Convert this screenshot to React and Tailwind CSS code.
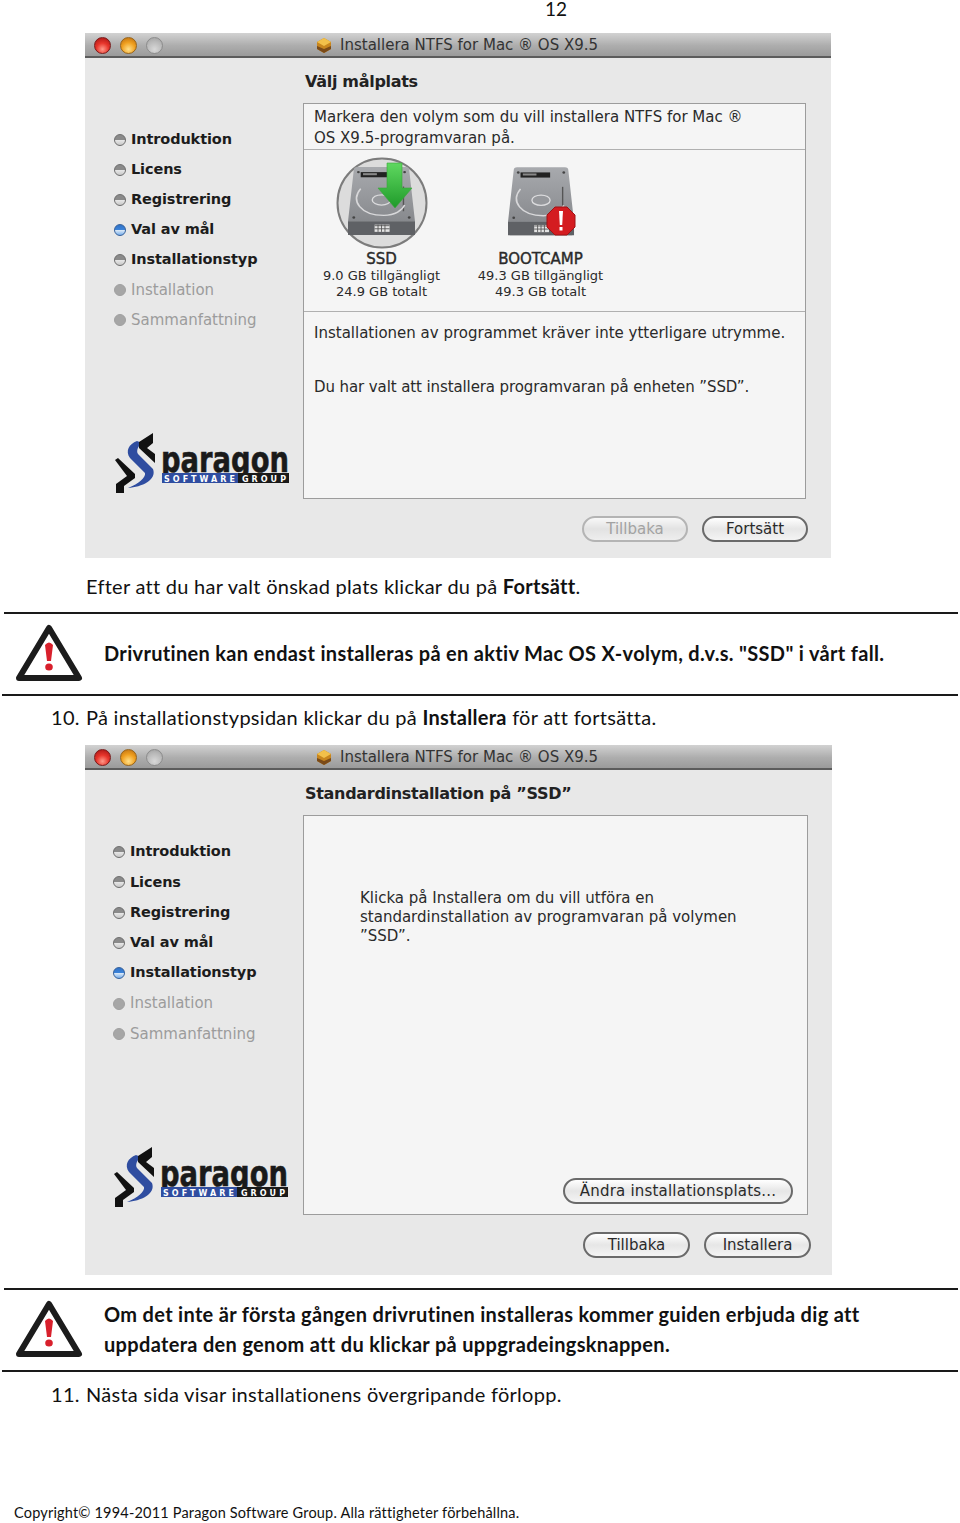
import React from "react";

const mac = { fontFamily: '"DejaVu Sans", sans-serif' };
const doc = { fontFamily: 'Lato, "Noto Sans", sans-serif' };

function Light({ c }) {
  const cls = {
    r: "bg-[radial-gradient(circle_at_50%_75%,#ff9a8a_0%,#e8362c_45%,#a01010_100%)] border-[#7a1a1a]",
    y: "bg-[radial-gradient(circle_at_50%_75%,#ffe08a_0%,#f0a020_50%,#b86a10_100%)] border-[#97641a]",
    g: "bg-[radial-gradient(circle_at_50%_75%,#d8d8d8_0%,#b8b8b8_60%,#9c9c9c_100%)] border-[#8c8c8c]",
  }[c];
  return <div className={`w-[17px] h-[17px] rounded-full border ${cls}`} />;
}

function Package() {
  return (
    <svg width="18" height="18" viewBox="0 0 18 18">
      <path d="M2 6 L9 2 L16 6 L16 13 L9 17 L2 13Z" fill="#c8861e" />
      <path d="M2 6 L9 2 L16 6 L9 10Z" fill="#f2c04a" />
      <path d="M2 10 L9 13 L16 10 L16 13 L9 17 L2 13Z" fill="#7a4a18" />
    </svg>
  );
}

function Bullet({ state }) {
  const cls = {
    done: "bg-[linear-gradient(#8a8a8a_0%,#8a8a8a_45%,#e8e8e8_50%,#c8c8c8_100%)] border-[#6d6d6d]",
    active: "bg-[linear-gradient(#2f72c8_0%,#3b82d8_45%,#e0ecf8_50%,#7ab0ec_100%)] border-[#35609a]",
    todo: "bg-[#a6a6a6] border-[#a0a0a0]",
  }[state];
  return <div className={`w-3 h-3 rounded-full border shrink-0 ${cls}`} />;
}

function Step({ label, state, row }) {
  return (
    <div className={`flex items-center gap-[5px] ${row}`}>
      <Bullet state={state} />
      <span className={state === "todo" ? "text-[15px] text-[#9c9c9c]" : "text-[14.5px] tracking-[-0.12px] font-bold text-[#1c1c1c]"}>
        {label}
      </span>
    </div>
  );
}

function Logo() {
  return (
    <svg width="180" height="64" viewBox="0 0 180 64">
      <text x="49" y="41" fontFamily='"DejaVu Sans", sans-serif' fontWeight="700" fontSize="36" textLength="128" lengthAdjust="spacingAndGlyphs" fill="#1a1a1a" stroke="#1a1a1a" strokeWidth="0.6">paragon</text>
      <rect x="40" y="42" width="140" height="22" fill="#e8e8e8" />
      <path d="M3 29 L6 27 L23 43 L23 47 L12 55 L12 62 L4 62 L4 53 L15 45Z" fill="#111" />
      <path d="M25 10 C17 13 13 20 18 27 L33 42 C34 46 27 53 16 57 C30 56 45 49 41 38 L26 23 C24 20 26 15 30 12Z" fill="#2f4da0" />
      <path d="M41 2 L27 11 L27 17 L43 32 L43 23 L35 17 L41 12Z" fill="#111" />
      <rect x="50" y="42" width="76" height="10" fill="#2f4da0" />
      <rect x="126" y="42" width="51" height="10" fill="#1a1a1a" />
      <text x="52" y="50.5" fontFamily='"DejaVu Sans", sans-serif' fontWeight="700" fontSize="8" textLength="71" fill="#fff">SOFTWARE</text>
      <text x="130" y="50.5" fontFamily='"DejaVu Sans", sans-serif' fontWeight="700" fontSize="8" textLength="44" fill="#fff">GROUP</text>
    </svg>
  );
}

function Disk({ id }) {
  return (
    <g>
      <defs>
        <linearGradient id={id} x1="0" y1="0" x2="0" y2="1">
          <stop offset="0" stopColor="#a8aaae" />
          <stop offset="1" stopColor="#7f8185" />
        </linearGradient>
      </defs>
      <path d="M16 12 Q16 9 19 9 L61 9 Q64 9 64 12 L69 62 L69 72 Q69 75 66 75 L14 75 Q11 75 11 72 L11 62Z" fill={`url(#${id})`} />
      <rect x="11" y="62" width="58" height="13" fill="#5f6165" />
      <rect x="34" y="65" width="13" height="7" fill="#e4e4e4" />
      <path d="M34 66 H47 M34 69 H47 M37 65 V72 M40 65 V72 M43 65 V72" stroke="#555" strokeWidth="0.8" />
      <rect x="22" y="14" width="26" height="5" fill="#222" />
      <rect x="24" y="15" width="12" height="2" fill="#888" />
      <path d="M59 28 V52" stroke="#555" strokeWidth="1.2" />
      <path d="M22 30 C13 42 22 56 42 56 C52 56 58 51 60 46" fill="none" stroke="#d8d8da" strokeWidth="1.4" />
      <ellipse cx="40" cy="41" rx="8" ry="5" fill="#96989c" stroke="#dcdcde" strokeWidth="1.2" />
      <circle cx="20" cy="14" r="1.2" fill="#444" />
      <circle cx="60" cy="14" r="1.2" fill="#444" />
      <circle cx="16" cy="58" r="1.2" fill="#444" />
      <circle cx="64" cy="58" r="1.2" fill="#444" />
    </g>
  );
}

function SsdIcon() {
  return (
    <svg width="92" height="92" viewBox="0 0 92 92">
      <circle cx="46" cy="46" r="44.5" fill="#dcdcdc" stroke="#7c7c7c" strokeWidth="2" />
      <g transform="translate(-0.7 0.7) scale(1.155 1.03)"><Disk id="d1" /></g>
      <defs>
        <linearGradient id="ga" x1="0" y1="0" x2="0" y2="1">
          <stop offset="0" stopColor="#5fd860" />
          <stop offset="1" stopColor="#1f9a2a" />
        </linearGradient>
      </defs>
      <path d="M51 6 L66 6 L66 31 L76 31 L59 51 L42 31 L51 31Z" fill="url(#ga)" stroke="#3aa53a" strokeWidth="0.6" />
    </svg>
  );
}

function BootIcon() {
  return (
    <svg width="76" height="72" viewBox="0 0 76 72">
      <g transform="translate(-7.5 -8) scale(1.138 1.03)"><Disk id="d2" /></g>
      <path d="M52 41 L64 41 L72 49 L72 61 L64 69 L52 69 L44 61 L44 49Z" fill="#d41c20" stroke="#a01215" strokeWidth="1" />
      <path d="M56 45 H60 L59.2 59 H56.8Z" fill="#fff" />
      <rect x="56.5" y="61" width="3" height="3.5" fill="#fff" />
    </svg>
  );
}

function TitleBar() {
  return (
    <div className="flex items-center h-[25px] pt-px bg-[linear-gradient(#d2d2d2,#adadad_55%,#9b9b9b)] border-b-2 border-b-[#5c5c5c] pl-[9px]">
      <div className="flex gap-[9px]">
        <Light c="r" />
        <Light c="y" />
        <Light c="g" />
      </div>
      <div className="flex items-center gap-[7px] ml-[152px] text-[15px] text-[#333]">
        <Package />
        <span>Installera NTFS for Mac ® OS X9.5</span>
      </div>
    </div>
  );
}

function Btn({ w, children, disabled, extra }) {
  return (
    <div
      className={`${w} flex h-[26px] items-center justify-center rounded-full border-2 text-[15px] ${extra || ""} ${
        disabled
          ? "border-[#b4b4b4] bg-[linear-gradient(#f8f8f8,#e2e2e2_50%,#eeeeee)] text-[#a2a2a2]"
          : "border-[#6a6a6a] bg-[linear-gradient(#ffffff,#e6e6e6_50%,#f4f4f4)] text-[#2a2a2a]"
      }`}
    >
      {children}
    </div>
  );
}

const steps = [
  ["Introduktion", "done"],
  ["Licens", "done"],
  ["Registrering", "done"],
];

function Sidebar({ active, pl, row }) {
  const rows = [
    ...steps,
    ["Val av mål", active === 0 ? "active" : "done"],
    ["Installationstyp", active === 1 ? "active" : "done"],
    ["Installation", "todo"],
    ["Sammanfattning", "todo"],
  ];
  return (
    <div className={`w-[218px] shrink-0 flex flex-col pt-[67px] ${pl}`}>
      {rows.map(([l, s]) => (
        <Step key={l} label={l} state={s} row={row} />
      ))}
      <div className="mt-[96px] -ml-[2px]">
        <Logo />
      </div>
    </div>
  );
}

function Window1() {
  return (
    <div className="ml-[85px] w-[746px] h-[525px] bg-[#e8e8e8] flex flex-col" style={mac}>
      <TitleBar />
      <div className="flex flex-1">
        <Sidebar active={0} pl="pl-[29px]" row="h-[30px]" />
        <div className="flex-1 flex flex-col pr-[25px]">
          <div className="h-[45px] pl-[2px] pt-[11px] text-[16px] tracking-[-0.3px] font-bold leading-[26px] text-[#222]">Välj målplats</div>
          <div className="h-[396px] border border-[#9c9c9c] bg-[#f5f5f5] flex flex-col text-[#2a2a2a]">
            <div className="h-[46px] border-b border-[#b0b0b0] pl-[10px] pt-[3px] text-[15px] leading-[21px]">
              <div className="whitespace-nowrap">Markera den volym som du vill installera NTFS for Mac ®</div>
              <div>OS X9.5-programvaran på.</div>
            </div>
            <div className="h-[162px] border-b border-[#b0b0b0] flex">
              <div className="w-[155px] flex flex-col items-center pt-[7px]">
                <SsdIcon />
                <div className="mt-[1px] text-[15px] leading-[18px] [-webkit-text-stroke:0.4px_#2a2a2a]">SSD</div>
                <div className="text-[13px] leading-[16px] text-center whitespace-nowrap">
                  9.0 GB tillgängligt<br />24.9 GB totalt
                </div>
              </div>
              <div className="w-[159px] flex flex-col items-center pt-[16px] pl-[4px]">
                <BootIcon />
                <div className="mt-[12px] text-[15px] leading-[18px] [-webkit-text-stroke:0.4px_#2a2a2a]">BOOTCAMP</div>
                <div className="text-[13px] leading-[16px] text-center whitespace-nowrap">
                  49.3 GB tillgängligt<br />49.3 GB totalt
                </div>
              </div>
            </div>
            <div className="pl-[10px] pt-[11px] text-[15px] leading-[21px]">
              <div className="whitespace-nowrap">Installationen av programmet kräver inte ytterligare utrymme.</div>
              <div className="mt-[33px] whitespace-nowrap tracking-[-0.1px]">Du har valt att installera programvaran på enheten ”SSD”.</div>
            </div>
          </div>
          <div className="flex justify-end gap-[14px] pt-[17px] -mr-[2px]">
            <Btn w="w-[106px]" disabled>Tillbaka</Btn>
            <Btn w="w-[106px]">Fortsätt</Btn>
          </div>
        </div>
      </div>
    </div>
  );
}

function Window2() {
  return (
    <div className="ml-[85px] w-[747px] h-[530px] bg-[#e8e8e8] flex flex-col" style={mac}>
      <TitleBar />
      <div className="flex flex-1">
        <Sidebar active={1} pl="pl-[28px]" row="h-[30.3px]" />
        <div className="flex-1 flex flex-col pr-[24px]">
          <div className="h-[45px] pl-[2px] pt-[11px] text-[16px] tracking-[-0.3px] font-bold leading-[26px] text-[#222] whitespace-nowrap">Standardinstallation på ”SSD”</div>
          <div className="h-[400px] border border-[#9c9c9c] bg-[#f5f5f5] flex flex-col justify-between text-[#2a2a2a]">
            <div className="pl-[56px] pt-[73px] text-[15px] leading-[19px] whitespace-nowrap">
              <div>Klicka på Installera om du vill utföra en</div>
              <div>standardinstallation av programvaran på volymen</div>
              <div>”SSD”.</div>
            </div>
            <div className="flex justify-end pr-[14px] pb-[10px]">
              <Btn w="w-[230px]" extra="tracking-[0.2px]">Ändra installationsplats...</Btn>
            </div>
          </div>
          <div className="flex justify-end gap-[14px] pt-[17px] -mr-[3px]">
            <Btn w="w-[107px]">Tillbaka</Btn>
            <Btn w="w-[107px]">Installera</Btn>
          </div>
        </div>
      </div>
    </div>
  );
}

function Warn() {
  return (
    <svg width="70" height="60" viewBox="0 0 70 60" className="shrink-0">
      <path d="M35 5 L65 55 L5 55Z" fill="#fff" stroke="#1c1c1c" strokeWidth="6" strokeLinejoin="round" />
      <path d="M31 22 Q35 17 39 22 L37 38 H33Z" fill="#d8202c" />
      <ellipse cx="35" cy="44" rx="3.8" ry="3.6" fill="#d8202c" />
    </svg>
  );
}

function Callout({ children }) {
  return (
    <div className="flex h-[80px]">
      <div className="ml-[14px] pt-[9px] w-[90px]"><Warn /></div>
      <div className="flex-1 flex flex-col justify-center pb-[3px] text-[20px] tracking-[0.32px] leading-[30px] font-bold text-[#111]">
        {children}
      </div>
    </div>
  );
}

function Line({ ml }) {
  return <div className={`h-[2px] ${ml} mr-[2px] bg-[#1a1a1a]`} />;
}

export default function App() {
  return (
    <div className="w-[960px] h-[1523px] bg-white text-[#111] overflow-hidden" style={doc}>
      <div className="h-[33px] pl-[545px] text-[19px] leading-[18px]">12</div>
      <Window1 />
      <div className="ml-[86px] mt-[13px] h-[30px] text-[20px] tracking-[0.27px] leading-[30px] whitespace-nowrap">
        Efter att du har valt önskad plats klickar du på <b>Fortsätt</b>.
      </div>
      <div className="mt-[11px]"><Line ml="ml-[4px]" /></div>
      <Callout>
        <div className="whitespace-nowrap">Drivrutinen kan endast installeras på en aktiv Mac OS X-volym, d.v.s. "SSD" i vårt fall.</div>
      </Callout>
      <Line ml="ml-[2px]" />
      <div className="flex mt-[6px] h-[30px] text-[20px] tracking-[0.28px] leading-[30px] whitespace-nowrap">
        <span className="ml-[51px] w-[35px]">10.</span>
        <span>På installationstypsidan klickar du på <b>Installera</b> för att fortsätta.</span>
      </div>
      <div className="mt-[13px]"><Window2 /></div>
      <div className="mt-[13px]"><Line ml="ml-[4px]" /></div>
      <Callout>
        <div className="whitespace-nowrap">Om det inte är första gången drivrutinen installeras kommer guiden erbjuda dig att</div>
        <div className="whitespace-nowrap">uppdatera den genom att du klickar på uppgradeingsknappen.</div>
      </Callout>
      <Line ml="ml-[2px]" />
      <div className="flex mt-[7px] h-[30px] text-[20px] tracking-[0.28px] leading-[30px] whitespace-nowrap">
        <span className="ml-[51px] w-[35px]">11.</span>
        <span>Nästa sida visar installationens övergripande förlopp.</span>
      </div>
      <div className="mt-[94px] pl-[14px] text-[14.5px] tracking-[0.19px] leading-[20px] whitespace-nowrap">
        Copyright© 1994-2011 Paragon Software Group. Alla rättigheter förbehållna.
      </div>
    </div>
  );
}
